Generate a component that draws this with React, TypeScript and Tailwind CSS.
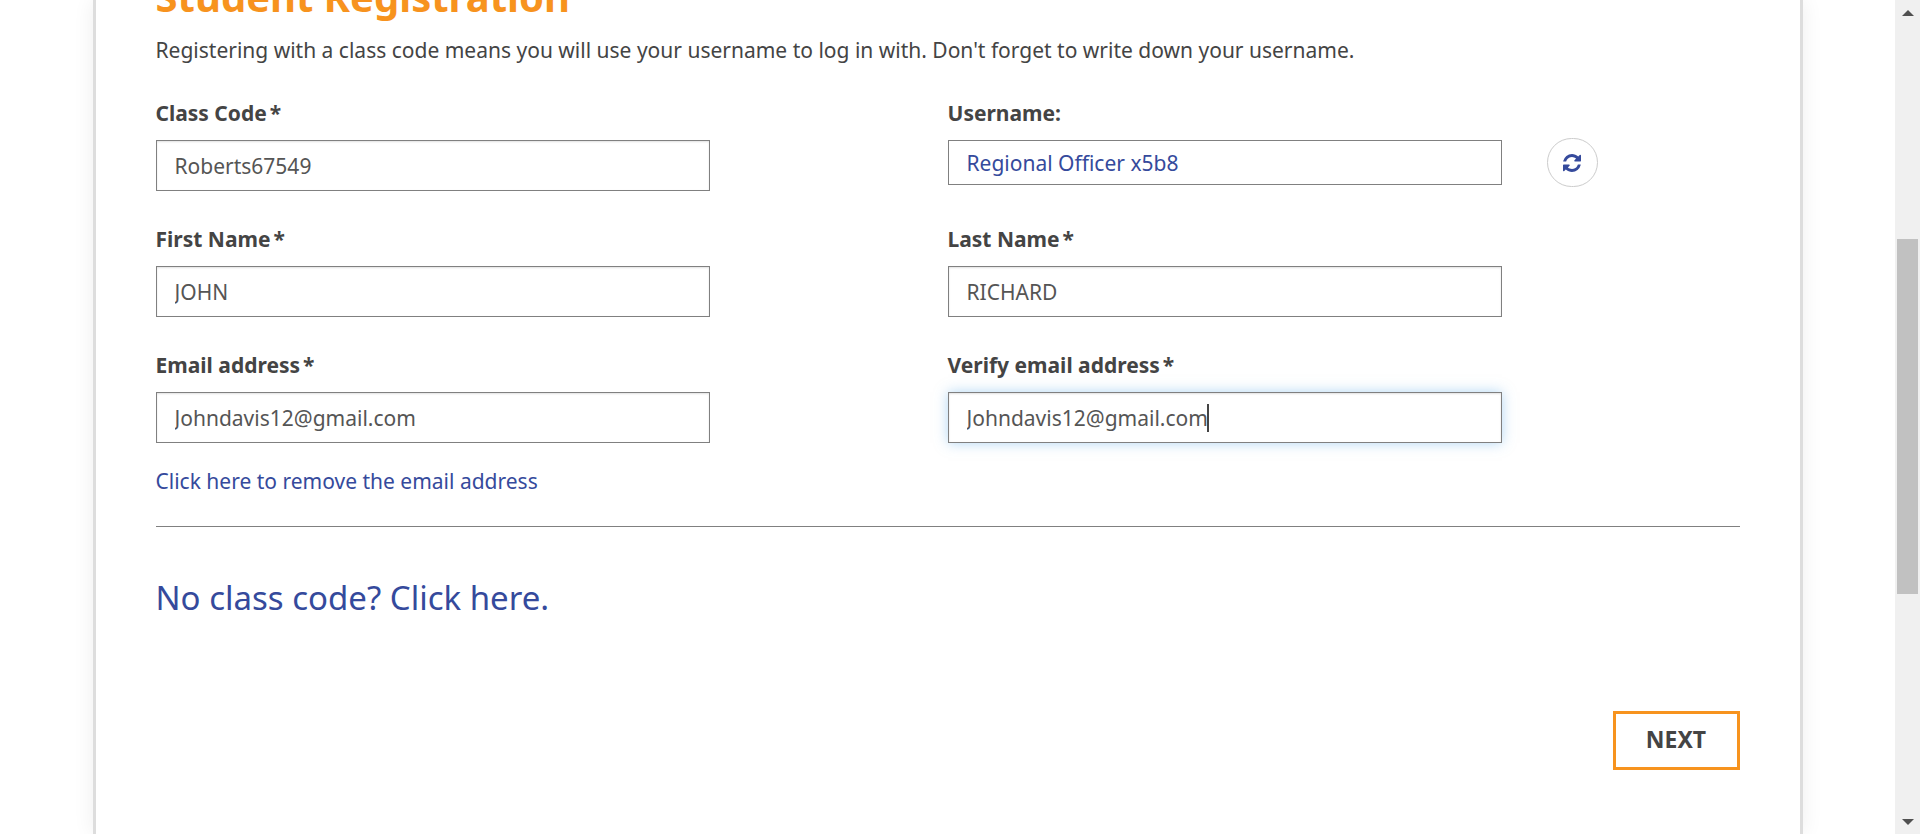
import { ReactNode } from "react";

const fieldBox =
  "block w-[70%] border border-[#808080] bg-white px-[18px] text-[21px] leading-[30px] outline-none";

function Label({ htmlFor, required, children }: { htmlFor: string; required?: boolean; children: ReactNode }) {
  return (
    <label htmlFor={htmlFor} className="mb-3 block text-[21px] leading-[30px] font-bold">
      {children}
      {required && <span className="ml-[3px]">*</span>}
    </label>
  );
}

function Field({ id, label, value }: { id: string; label: string; value: string }) {
  return (
    <div>
      <Label htmlFor={id} required>
        {label}
      </Label>
      <input
        id={id}
        type="text"
        defaultValue={value}
        className={`${fieldBox} h-[51px] text-[#555] shadow-[inset_0_1px_2px_rgba(0,0,0,0.12)]`}
      />
    </div>
  );
}

function Scrollbar() {
  return (
    <div aria-hidden="true" className="flex w-[25px] shrink-0 flex-col bg-[#f0f0f0] px-[2px]">
      <div className="flex h-[25px] items-center justify-center">
        <svg width="12" height="6" viewBox="0 0 12 6" fill="#505050">
          <path d="M6 0 12 6H0z" />
        </svg>
      </div>
      <div className="flex flex-1 flex-col">
        <div className="grow-[214]" />
        <div className="grow-[355] bg-[#c1c1c1]" />
        <div className="grow-[215]" />
      </div>
      <div className="flex h-[25px] items-center justify-center">
        <svg width="12" height="6" viewBox="0 0 12 6" fill="#505050">
          <path d="M0 0H12L6 6z" />
        </svg>
      </div>
    </div>
  );
}

export default function App() {
  return (
    <div className="flex min-h-screen overflow-hidden bg-white font-['Noto_Sans',sans-serif] text-[#444]">
      <div className="flex flex-1 justify-center">
        <main className="w-full max-w-[1710px] border-x-[3px] border-[#ddd] bg-white px-[60px] shadow-[0_0_20px_rgba(0,0,0,0.07)]">
          <h1 className="-mt-[33px] text-[40px] leading-[60px] font-bold text-[#f7931e]">Student Registration</h1>
          <p className="mt-2 text-[21px] leading-[30px]">
            Registering with a class code means you will use your username to log in with. Don't forget to write down
            your username.
          </p>

          <form onSubmit={(e) => e.preventDefault()}>
            <div className="mt-[33px] grid grid-cols-2 gap-y-[33px]">
              <Field id="class-code" label="Class Code" value="Roberts67549" />
              <div>
                <Label htmlFor="username">Username:</Label>
                <div className="flex items-start">
                  <input
                    id="username"
                    readOnly
                    defaultValue="Regional Officer x5b8"
                    className={`${fieldBox} h-[45px] text-[#354a9c]`}
                  />
                  <button
                    type="button"
                    aria-label="Generate a new username"
                    className="-mt-[2px] ml-[45px] flex h-[49px] w-[51px] items-center justify-center rounded-full border border-[#ccc] text-[#354a9c]"
                  >
                    <svg width="18" height="18" viewBox="0 0 1536 1536" fill="currentColor">
                      <path d="M1511 928q0 5-1 7-64 268-268 434.500T764 1536q-146 0-282.500-55T238 1324l-129 129q-19 19-45 19t-45-19-19-45V960q0-26 19-45t45-19h448q26 0 45 19t19 45-19 45l-137 137q71 66 161 102t187 36q134 0 250-65t186-179q11-17 53-117 8-23 30-23h192q13 0 22.500 9.500t9.500 22.500zM1536 128v448q0 26-19 45t-45 19h-448q-26 0-45-19t-19-45 19-45l138-138Q969 256 768 256q-134 0-250 65T332 500q-11 17-53 117-8 23-30 23H50q-13 0-22.500-9.500T18 608v-7q65-268 270-434.500T768 0q146 0 284 55.500T1297 212l130-129q19-19 45-19t45 19 19 45z" />
                    </svg>
                  </button>
                </div>
              </div>
              <Field id="first-name" label="First Name" value="JOHN" />
              <Field id="last-name" label="Last Name" value="RICHARD" />
              <Field id="email" label="Email address" value="Johndavis12@gmail.com" />
              <div>
                <Label htmlFor="verify-email" required>
                  Verify email address
                </Label>
                <div className="relative">
                  <input
                    id="verify-email"
                    type="text"
                    defaultValue="Johndavis12@gmail.com"
                    className={`${fieldBox} h-[51px] text-[#555] shadow-[inset_0_1px_2px_rgba(0,0,0,0.12),0_0_12px_rgba(102,175,233,0.5)]`}
                  />
                  <span className="absolute top-[12px] left-[259px] h-[28px] w-[2px] bg-[#444]" />
                </div>
              </div>
            </div>

            <a href="#remove-email" className="mt-[23px] inline-block text-[21px] leading-[30px] text-[#354a9c]">
              Click here to remove the email address
            </a>
            <hr className="mt-[30px] border-t border-[#808080]" />
            <a href="#no-class-code" className="mt-[47px] inline-block text-[33px] leading-[48px] text-[#354a9c]">
              No class code? Click here.
            </a>

            <div className="mt-[89px] mb-[60px] flex justify-end">
              <button
                type="submit"
                className="h-[59px] w-[127px] border-[3px] border-[#f7931e] bg-white pb-[3px] text-[23px] leading-[30px] font-bold"
              >
                NEXT
              </button>
            </div>
          </form>
        </main>
      </div>
      <Scrollbar />
    </div>
  );
}
